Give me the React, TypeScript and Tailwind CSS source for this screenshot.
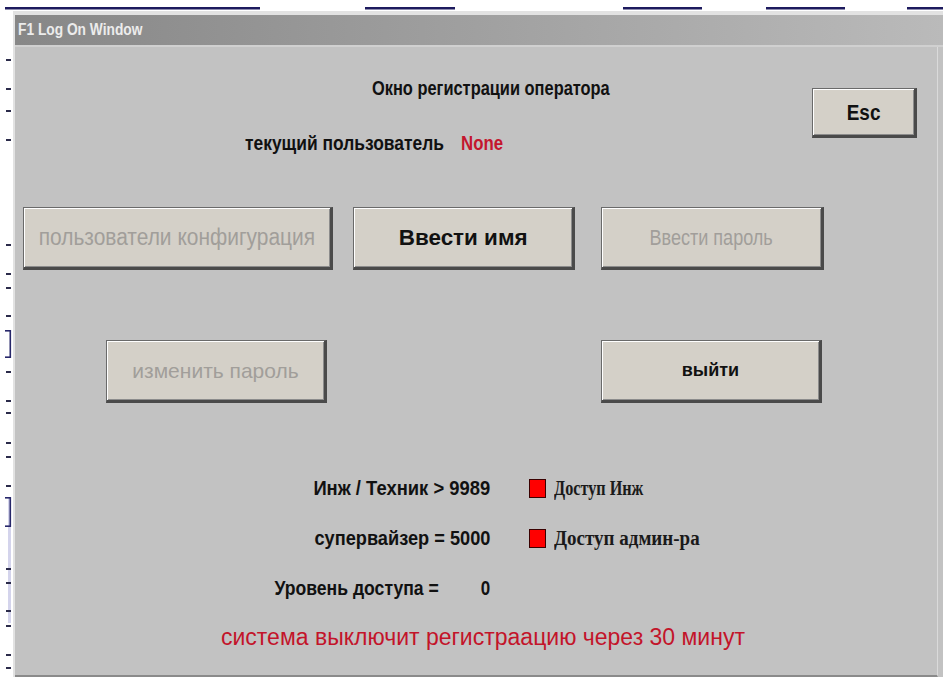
import type { ReactNode } from "react";

const sans = { fontFamily: '"Liberation Sans", Arial, sans-serif' };
const serif = { fontFamily: '"Liberation Serif", "Times New Roman", serif' };

// ticks along the left edge of the document behind the window
const ticks = [48, 77, 99, 128, 233, 262, 276, 304, 360, 389, 401, 431, 445, 474, 557, 571, 599, 614, 643, 656];
const brackets: [number, number][] = [
  [319, 347],
  [486, 516],
];

function Ruler() {
  return (
    <svg width="13" height="666" className="shrink-0">
      <rect x="8" y="486" width="3" height="126" fill="#d4d4ec" />
      {ticks.map((y) => (
        <rect key={y} x="6" y={y} width="5" height="2" fill="#2b2b4a" />
      ))}
      {brackets.map(([a, b]) => (
        <g key={a} fill="#27276a">
          <rect x="9.5" y={a} width="1.6" height={b - a} />
          <rect x="5" y={a} width="6" height="1.6" />
          <rect x="5" y={b - 1.6} width="6" height="1.6" />
        </g>
      ))}
    </svg>
  );
}

function TopEdge() {
  const segs: [number, number][] = [
    [5, 260],
    [365, 455],
    [623, 702],
    [766, 845],
    [907, 943],
  ];
  return (
    <svg width="943" height="11" className="block">
      {segs.map(([a, b]) => (
        <rect key={a} x={a} y="7" width={b - a} height="2.5" fill="#1d1a5e" />
      ))}
    </svg>
  );
}

// condensed text: the panel font is a narrow face, so squeeze a regular one
function Sq({ children, className = "" }: { children: ReactNode; className?: string }) {
  return <span className={`inline-block whitespace-nowrap ${className}`}>{children}</span>;
}

function Btn({
  children,
  w,
  h = "h-[63px]",
  disabled,
  className = "",
}: {
  children: ReactNode;
  w: string;
  h?: string;
  disabled?: boolean;
  className?: string;
}) {
  return (
    <button
      style={sans}
      className={`${w} ${h} ${className} flex shrink-0 items-center justify-center overflow-visible border-t border-l border-[#6a6a6a] border-r-[3px] border-b-[3px] border-r-[#4a4a4a] border-b-[#4a4a4a] bg-[#d4d0c8] shadow-[inset_1px_1px_0_#ffffff,inset_-1px_-1px_0_#8c8c8c] ${
        disabled ? "text-[#a19e9a]" : "text-[#111] font-bold"
      }`}
    >
      {children}
    </button>
  );
}

function AccessRow({
  label,
  labelScale,
  value,
  lamp,
  lampScale = "",
}: {
  label: string;
  labelScale: string;
  value?: string;
  lamp?: string;
  lampScale?: string;
}) {
  return (
    <div className="flex h-[20px] items-center">
      <div style={sans} className="flex w-[475px] shrink-0 justify-end text-[20px] font-bold leading-[20px] text-[#111]">
        <Sq className={`origin-right ${labelScale}`}>{label}</Sq>
        {value && <Sq className="ml-[40px] origin-right scale-x-[0.85]">{value}</Sq>}
      </div>
      {lamp && (
        <>
          <span className="ml-[39px] h-[19px] w-[17px] shrink-0 border border-[#3a0000] bg-[#ff0000]" />
          <span style={serif} className="ml-[8px] text-[20px] font-bold leading-[20px] text-[#1a1a1a]">
            <Sq className={`origin-left ${lampScale}`}>{lamp}</Sq>
          </span>
        </>
      )}
    </div>
  );
}

export default function App() {
  return (
    <div className="h-[677px] w-[943px] overflow-hidden bg-white">
      <TopEdge />
      <div className="flex">
        <Ruler />
        <div className="flex h-[666px] flex-1 flex-col border-t-[4px] border-l-2 border-[#e2e2e2] bg-[#c2c2c2]">
          <div className="flex h-[30px] items-center bg-linear-to-r from-[#878787] to-[#bababa] px-[3px]">
            <span style={sans} className="text-[16px] font-bold text-[#ececec]">
              <Sq className="origin-left scale-x-[0.86]">F1 Log On Window</Sq>
            </span>
          </div>
          <div className="h-[2px] bg-[#d0d0d0]" />

          <div className="mr-[5px] flex flex-1 flex-col border-r border-b-[2px] border-r-[#dadada] border-b-[#8a8a8a]">
            <div className="flex items-start">
              <div style={sans} className="flex flex-col text-[20px] font-bold leading-[20px]">
                <div className="ml-[357px] mt-[31px] text-[#111]">
                  <Sq className="origin-left scale-x-[0.82]">Окно регистрации оператора</Sq>
                </div>
                <div className="ml-[230px] mt-[35px] flex">
                  <span className="w-[216px] shrink-0 text-[#111]">
                    <Sq className="origin-left scale-x-[0.87]">текущий пользователь</Sq>
                  </span>
                  <span className="text-[#c4162e]">
                    <Sq className="origin-left scale-x-[0.84]">None</Sq>
                  </span>
                </div>
              </div>
              <Btn w="w-[105px]" h="h-[50px]" className="ml-auto mr-[20px] mt-[41px] text-[22px]">
                <Sq className="scale-x-[0.86]">Esc</Sq>
              </Btn>
            </div>

            <div className="ml-[8px] mt-[54px] flex">
              <Btn w="w-[310px]" className="text-[23px]" disabled>
                <Sq className="scale-x-[0.91]">пользователи конфигурация</Sq>
              </Btn>
              <Btn w="w-[222px]" className="ml-[20px] text-[22px]">
                <Sq className="scale-x-[1.02]">Ввести имя</Sq>
              </Btn>
              <Btn w="w-[223px]" className="ml-[26px] text-[22px]" disabled>
                <Sq className="scale-x-[0.82]">Ввести пароль</Sq>
              </Btn>
            </div>

            <div className="ml-[91px] mt-[70px] flex">
              <Btn w="w-[221px]" className="text-[21px]" disabled>
                <Sq>изменить пароль</Sq>
              </Btn>
              <Btn w="w-[221px]" className="ml-[274px] text-[18px]">
                <Sq>выйти</Sq>
              </Btn>
            </div>

            <div className="mt-[75px] flex flex-col gap-[30px]">
              <AccessRow label="Инж / Техник > 9989" labelScale="scale-x-[0.92]" lamp="Доступ Инж" lampScale="scale-x-[0.81]" />
              <AccessRow label="супервайзер = 5000" labelScale="scale-x-[0.91]" lamp="Доступ админ-ра" lampScale="scale-x-[0.95]" />
              <AccessRow label="Уровень доступа =" labelScale="scale-x-[0.88]" value="0" />
            </div>

            <div style={sans} className="ml-[206px] mt-[27px] text-[23px] leading-[24px] text-[#c3142a]">
              система выключит регистраацию через 30 минут
            </div>
          </div>
        </div>
      </div>
    </div>
  );
}
